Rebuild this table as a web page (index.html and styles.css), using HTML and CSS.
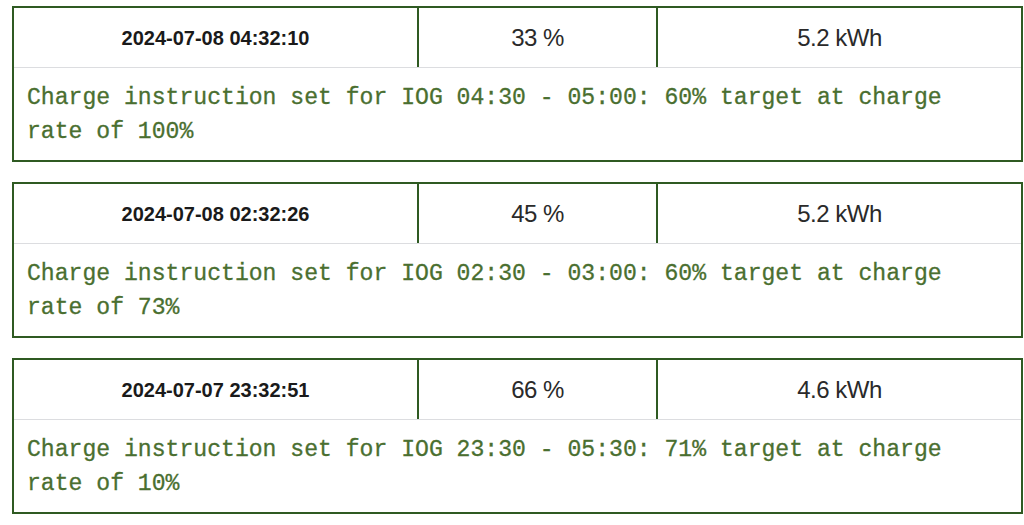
FILE: index.html
```html
<!DOCTYPE html>
<html>
<head>
<meta charset="utf-8">
<link rel="stylesheet" href="styles.css">
</head>
<body>
<div class="list">
  <div class="card">
    <div class="head">
      <div class="cell date">2024-07-08 04:32:10</div>
      <div class="cell val">33 %</div>
      <div class="cell val last">5.2 kWh</div>
    </div>
    <div class="msg">Charge instruction set for IOG 04:30 - 05:00: 60% target at charge rate of 100%</div>
  </div>
  <div class="card">
    <div class="head">
      <div class="cell date">2024-07-08 02:32:26</div>
      <div class="cell val">45 %</div>
      <div class="cell val last">5.2 kWh</div>
    </div>
    <div class="msg">Charge instruction set for IOG 02:30 - 03:00: 60% target at charge rate of 73%</div>
  </div>
  <div class="card">
    <div class="head">
      <div class="cell date">2024-07-07 23:32:51</div>
      <div class="cell val">66 %</div>
      <div class="cell val last">4.6 kWh</div>
    </div>
    <div class="msg">Charge instruction set for IOG 23:30 - 05:30: 71% target at charge rate of 10%</div>
  </div>
</div>
</body>
</html>
```
FILE: styles.css
```css
html, body {
  margin: 0;
  padding: 0;
  background: #ffffff;
}
.list {
  padding: 6px 1px 0 12px;
  display: flex;
  flex-direction: column;
  gap: 20px;
}
.card {
  border: 2px solid #2f5a22;
  background: #fff;
}
.head {
  display: grid;
  grid-template-columns: 405px 239px 1fr;
  height: 59px;
  border-bottom: 1px solid #dcdde0;
}
.cell {
  display: flex;
  align-items: center;
  justify-content: center;
  border-right: 2px solid #2f5a22;
  font-family: "Liberation Sans", Arial, sans-serif;
  color: #1a1a1a;
}
.cell.last {
  border-right: none;
}
.date {
  font-weight: bold;
  font-size: 20px;
  padding-top: 2px;
}
.val {
  font-size: 24px;
  letter-spacing: -0.5px;
  color: #2a2a2a;
  padding-top: 1px;
}
.msg {
  font-family: "Courier New", "Nimbus Mono PS", FreeMono, "Liberation Mono", monospace;
  font-size: 23.1px;
  line-height: 34px;
  color: #4a6f30;
  padding: 13px 40px 11px 13px;
  -webkit-text-stroke: 0.3px #4a6f30;
}
```
